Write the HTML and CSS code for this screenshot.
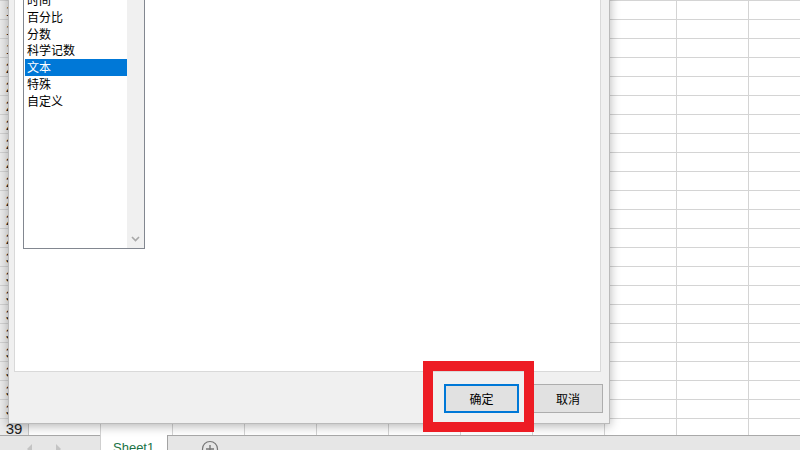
FILE: index.html
```html
<!DOCTYPE html>
<html lang="zh-CN">
<head>
    <meta charset="UTF-8">
    <meta name="viewport" content="width=device-width, initial-scale=1.0">
    <title>设置单元格格式</title>
    <link rel="stylesheet" href="styles.css">
</head>
<body>
    <div class="sheet">
        <div class="row-heads">
            <div class="row-num">17</div>
            <div class="row-num">18</div>
            <div class="row-num">19</div>
            <div class="row-num">20</div>
            <div class="row-num">21</div>
            <div class="row-num">22</div>
            <div class="row-num">23</div>
            <div class="row-num">24</div>
            <div class="row-num">25</div>
            <div class="row-num">26</div>
            <div class="row-num">27</div>
            <div class="row-num">28</div>
            <div class="row-num">29</div>
            <div class="row-num">30</div>
            <div class="row-num">31</div>
            <div class="row-num">32</div>
            <div class="row-num">33</div>
            <div class="row-num">34</div>
            <div class="row-num">35</div>
            <div class="row-num">36</div>
            <div class="row-num">37</div>
            <div class="row-num">38</div>
            <div class="row-num">39</div>
        </div>
        <div class="cells"></div>
    </div>

    <div class="tabbar">
        <div class="tab-nav">
            <svg width="6" height="10" viewBox="0 0 6 10"><polygon points="5,0 5,10 0,5" fill="#c4c4c4"/></svg>
            <svg width="6" height="10" viewBox="0 0 6 10"><polygon points="1,0 1,10 6,5" fill="#c4c4c4"/></svg>
        </div>
        <div class="sheet-tab">Sheet1</div>
        <div class="add-sheet">
            <svg width="18" height="18" viewBox="0 0 18 18">
                <circle cx="9" cy="9" r="7.5" fill="none" stroke="#777" stroke-width="1.2"/>
                <path d="M9 5v8M5 9h8" stroke="#777" stroke-width="1.4"/>
            </svg>
        </div>
    </div>

    <!-- format cells dialog -->
    <div class="dialog">
        <div class="panel">
            <div class="listbox">
                <ul class="items">
                    <li>时间</li>
                    <li>百分比</li>
                    <li>分数</li>
                    <li>科学记数</li>
                    <li class="selected">文本</li>
                    <li>特殊</li>
                    <li>自定义</li>
                </ul>
                <div class="scrollbar">
                    <svg width="9" height="6" viewBox="0 0 9 6"><polyline points="1,1 4.5,4.5 8,1" fill="none" stroke="#a8a8a8" stroke-width="1.6"/></svg>
                </div>
            </div>
        </div>
        <div class="footer">
            <button class="btn btn-ok">确定</button>
            <button class="btn btn-cancel">取消</button>
        </div>
    </div>

    <div class="highlight"></div>
</body>
</html>
```

FILE: styles.css
```css
* {
    box-sizing: border-box;
    margin: 0;
    padding: 0;
}

body {
    width: 800px;
    height: 450px;
    overflow: hidden;
    position: relative;
    background-color: #fff;
    font-family: "Liberation Sans", Arial, sans-serif;
}

/* spreadsheet behind the dialog */
.sheet {
    display: flex;
    height: 435px;
}

.row-heads {
    width: 29px;
    background-color: #ececec;
    border-right: 1px solid #c6c6c6;
    display: flex;
    flex-direction: column;
}

.row-num {
    height: 19px;
    flex-shrink: 0;
    border-top: 1px solid #d2d2d2;
    text-align: center;
    font-size: 15px;
    line-height: 20px;
    color: #222;
}

.cells {
    flex: 1;
    background-color: #fff;
    background-image:
        linear-gradient(to bottom, #d4d4d4 0, #d4d4d4 1px, transparent 1px),
        linear-gradient(to right, transparent 0, transparent 71px, #d4d4d4 71px, #d4d4d4 72px);
    background-size: 100% 19px, 72px 100%;
}

.tabbar {
    display: flex;
    height: 26px;
    background-color: #e6e6e6;
    border-top: 1px solid #a9a9a9;
}

.tab-nav {
    width: 100px;
    display: flex;
    gap: 22px;
    padding: 8px 0 0 27px;
}

.sheet-tab {
    width: 68px;
    background-color: #fff;
    border-left: 1px solid #cfcfcf;
    border-right: 1px solid #a3a3a3;
    margin-top: -1px;
    padding: 5px 0 0 12px;
    font-size: 13px;
    color: #217346;
}

.add-sheet {
    padding: 4px 0 0 33px;
}

/* dialog */
.dialog {
    position: absolute;
    left: 8px;
    top: -20px;
    width: 602px;
    height: 444px;
    background-color: #f0f0f0;
    border: 1px solid #bababa;
    box-shadow: 0 2px 10px rgba(0, 0, 0, 0.3);
    display: flex;
    flex-direction: column;
}

.panel {
    height: 391px;
    margin: 0 8px 0 5px;
    background-color: #fff;
    border: 1px solid #d9d9d9;
    border-top: none;
    padding: 7px 0 0 8px;
}

.listbox {
    width: 122px;
    height: 261px;
    border: 1px solid #828790;
    display: flex;
}

.items {
    list-style: none;
    width: 103px;
    padding: 3px 0 0 1px;
    font-family: "Noto Sans CJK SC", sans-serif;
    font-size: 12px;
    color: #000;
}

.items li {
    height: 16.75px;
    line-height: 16.75px;
    padding-left: 2px;
}

.items li.selected {
    background-color: #0078d7;
    color: #fff;
}

.scrollbar {
    width: 17px;
    background-color: #f0f0f0;
    display: flex;
    flex-direction: column;
    justify-content: flex-end;
    align-items: center;
    padding-bottom: 6px;
}

.scrollbar svg {
    display: block;
}

.footer {
    flex: 1;
    display: flex;
    justify-content: flex-end;
    gap: 14px;
    padding: 12px 6px 0 0;
}

.btn {
    height: 29px;
    background-color: #e1e1e1;
    border: 1px solid #adadad;
    font-family: "Noto Sans CJK SC", sans-serif;
    font-size: 12px;
    color: #000;
}

.btn-ok {
    width: 75px;
    border: 2px solid #0078d7;
}

.btn-cancel {
    width: 70px;
}

/* red annotation box round the OK button */
.highlight {
    position: absolute;
    left: 423px;
    top: 361px;
    width: 111px;
    height: 71px;
    border: 10px solid #ed1c24;
}
```
